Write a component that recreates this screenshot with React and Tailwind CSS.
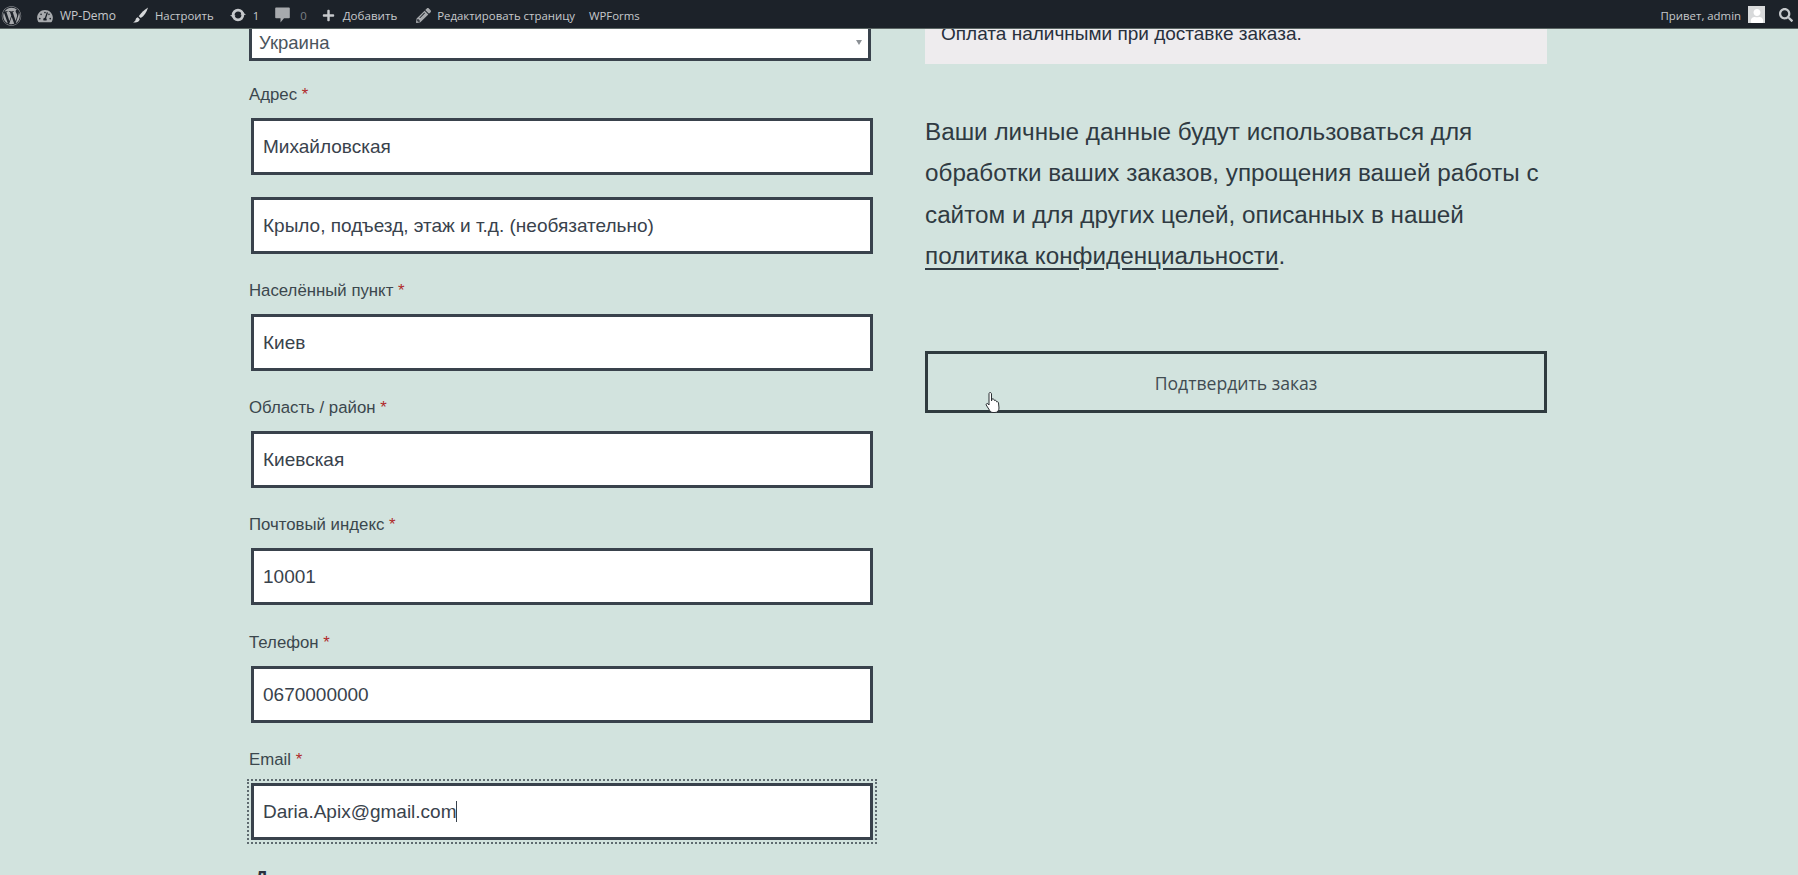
import React from "react";
import { FaWordpress, FaTachometerAlt, FaPlus, FaPencilAlt, FaSearch, FaUser } from "react-icons/fa";

function BarItem({ icon, text, className = "", textClass = "text-[#c6c9cc]" }) {
  return (
    <div className={`flex items-center ${className}`}>
      {icon}
      {text && <span className={textClass}>{text}</span>}
    </div>
  );
}

function BrushIcon() {
  return (
    <svg viewBox="0 0 18 18" className="mr-[6px] h-[16px] w-[17px] text-[#d5d7d9]" fill="currentColor">
      <path d="M17.5.5C14 2.5 9.5 6.5 7 10.5l2.3 2C13 10 16 5.5 17.5.5z" />
      <path d="M6 11.5c-1.6.4-2.3 1.6-2.6 3-.3 1.2-1.3 2-2.9 2.7 3 .8 7 .2 7.7-3.4L6 11.5z" />
    </svg>
  );
}

function UpdateIcon() {
  return (
    <svg viewBox="0 0 16 16" className="mr-[7px] h-[16px] w-[16px] text-[#c6c9cc]" fill="currentColor">
      <circle cx="8" cy="8" r="4.8" fill="none" stroke="currentColor" strokeWidth="2.8" />
      <path d="M16 8l-3.500-3.200-2 2.600z" />
      <path d="M0 8l3.500 3.200 2-2.600z" />
    </svg>
  );
}

function CommentIcon() {
  return (
    <svg viewBox="0 0 15 16" className="mr-[10px] h-[16px] w-[15px] text-[#a7aaad]" fill="currentColor">
      <path d="M1 .5h13c.4 0 .8.4.8.8v9.2c0 .4-.4.8-.8.8H9L5.5 15.500V11.300H1c-.4 0-.8-.4-.8-.8V1.300C.2.9.6.5 1 .5z" />
    </svg>
  );
}

function AdminBar() {
  return (
    <header className="flex h-[29px] shrink-0 items-center justify-between border-b border-[#5b6664] bg-[#1c2229] pt-[3px] font-['Open_Sans',sans-serif] text-[11.4px] text-[#c6c9cc]">
      <div className="flex items-center">
        <FaWordpress className="ml-[1px] h-[20px] w-[21px] text-[#a7aaad]" />
        <BarItem className="ml-[15px] text-[12px]" icon={<FaTachometerAlt className="mr-[7px] h-[14px] w-[16px] text-[#a7aaad]" />} text="WP-Demo" />
        <BarItem className="ml-[16px]" icon={<BrushIcon />} text="Настроить" />
        <BarItem className="ml-[16px]" icon={<UpdateIcon />} text="1" />
        <BarItem className="ml-[16px]" icon={<CommentIcon />} text="0" textClass="text-[#7b8085]" />
        <BarItem className="ml-[15px] text-[11.6px]" icon={<FaPlus className="mr-[8px] h-[13px] w-[13px] text-[#c6c9cc]" />} text="Добавить" />
        <BarItem className="ml-[19px]" icon={<FaPencilAlt className="mr-[6px] h-[15px] w-[15px] text-[#a7aaad]" />} text="Редактировать страницу" />
        <BarItem className="ml-[14px]" text="WPForms" />
      </div>
      <div className="flex items-center">
        <span>Привет, admin</span>
        <div className="mb-[2px] ml-[7px] flex h-[17px] w-[17px] items-end justify-center overflow-hidden bg-[#d8dadb]">
          <FaUser className="h-[14px] w-[14px] text-white" />
        </div>
        <FaSearch className="mb-[2px] ml-[14px] mr-[5px] h-[14px] w-[14px] text-[#c6c9cc]" />
      </div>
    </header>
  );
}

function Label({ children }) {
  return (
    <div className="h-[20px] text-[16.8px] leading-[20px] text-[#3b474d]">
      {children} <span className="text-[#b02a2a]">*</span>
    </div>
  );
}

function Input({ value }) {
  return (
    <input
      readOnly
      value={value}
      className="block h-[57px] w-[622px] border-[3px] border-[#39424c] bg-white px-[9px] pt-[1px] text-[19px] text-[#39424c] outline-none"
    />
  );
}

function Field({ label, value }) {
  return (
    <div className="flex flex-col gap-[13px]">
      <Label>{label}</Label>
      <div className="ml-[2px]">
        <Input value={value} />
      </div>
    </div>
  );
}

function EmailField() {
  return (
    <div className="flex flex-col gap-[13px]">
      <Label>Email</Label>
      <div className="relative ml-[2px] w-[622px] outline-2 outline-offset-[2px] outline-dotted outline-[#5f6b70]">
        <Input value="Daria.Apix@gmail.com" />
        <span className="absolute left-[205px] top-[18px] h-[21px] w-px bg-[#39424c]" />
      </div>
    </div>
  );
}

export default function App() {
  return (
    <div className="flex h-[875px] flex-col overflow-hidden bg-[#d2e3de] font-['Liberation_Sans',sans-serif]">
      <AdminBar />
      <main className="relative flex flex-1 items-start pl-[249px]">
        <section className="flex w-[628px] shrink-0 flex-col">
          <div className="flex h-[32px] w-[622px] items-center justify-between border-x-[3px] border-b-[3px] border-[#39424c] bg-white pb-[2px] pl-[7px] pr-[6px] text-[18.5px] text-[#4a545c]">
            <span>Украина</span>
            <span className="h-0 w-0 border-x-[3px] border-t-[5px] border-x-transparent border-t-[#8b9095]" />
          </div>
          <div className="mt-[23.5px] flex flex-col gap-[27.3px]">
            <div className="flex flex-col gap-[14px]">
              <Field label="Адрес" value="Михайловская" />
              <div className="ml-[2px] mt-[8px]">
                <Input value="Крыло, подъезд, этаж и т.д. (необязательно)" />
              </div>
            </div>
            <Field label="Населённый пункт" value="Киев" />
            <Field label="Область / район" value="Киевская" />
            <Field label="Почтовый индекс" value="10001" />
            <Field label="Телефон" value="0670000000" />
            <EmailField />
          </div>
          <div className="ml-[6px] mt-[28px] text-[18px] font-bold leading-[20px] text-[#28303d]">Д</div>
        </section>
        <section className="ml-[48px] w-[622px] shrink-0">
          <div className="flex h-[35px] items-start overflow-hidden bg-[#eeecee] pl-[16px] text-[19px] leading-[12px] text-[#28303d]">
            <span className="-mt-[1px]">Оплата наличными при доставке заказа.</span>
          </div>
          <p className="mt-[47px] text-[24.25px] leading-[41.4px] text-[#2f3a42]">
            Ваши личные данные будут использоваться для обработки ваших заказов, упрощения вашей работы с сайтом и для других целей, описанных в нашей{" "}
            <a className="underline underline-offset-[4px]">политика конфиденциальности</a>.
          </p>
          <button className="relative mt-[74px] flex h-[62px] w-full items-center justify-center border-[3px] border-[#2f3b3f] pt-[4px] font-['Open_Sans',sans-serif] text-[17.6px] text-[#414c52]">
            Подтвердить заказ
          </button>
        </section>
        <svg viewBox="0 0 16 24" className="absolute left-[985px] top-[362px] h-[24px] w-[16px]">
          <path d="M5 1.5c1 0 1.5.7 1.5 1.5v7l.5-2c.8-.5 1.7-.2 2 .6l.4.9c.7-.5 1.7-.2 2 .6l.3.8c.8-.4 1.7 0 1.8.9l.5 5.2c0 2.5-1.5 4.5-4 4.5H8c-1.500 0-2.500-.7-3.300-2L1.200 14c-.4-1 .8-2 1.800-1.200l1 1.200V3c0-.8.3-1.500 1-1.500z" fill="#fff" stroke="#2a2f33" strokeWidth="1" />
        </svg>
      </main>
    </div>
  );
}
